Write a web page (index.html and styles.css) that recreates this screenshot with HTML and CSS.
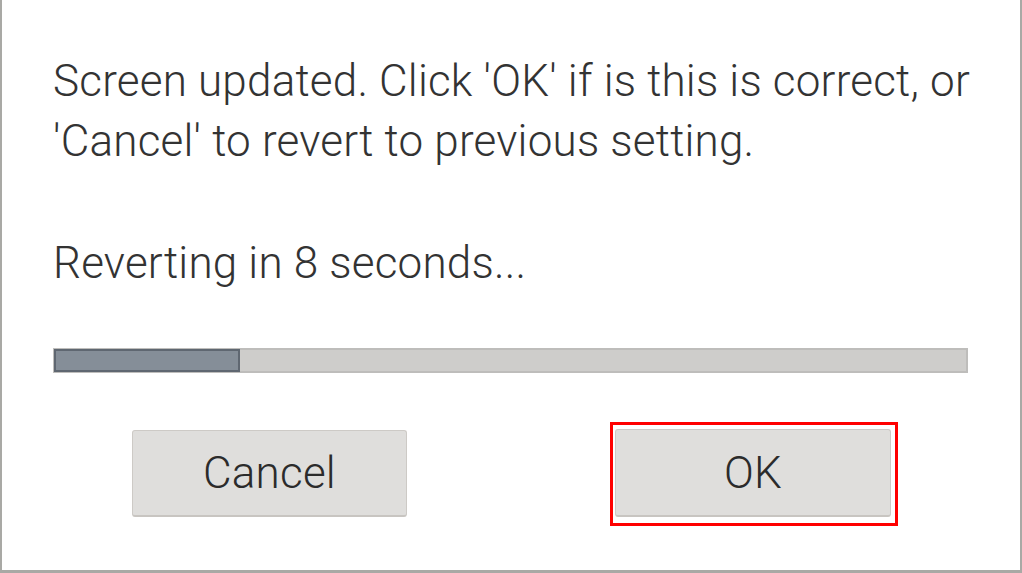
FILE: index.html
```html
<!DOCTYPE html>
<html>
<head>
<meta charset="utf-8">
<link rel="stylesheet" href="styles.css">
</head>
<body>
<div class="dialog">
  <p class="message">Screen updated. Click 'OK' if is this is correct, or<br>'Cancel' to revert to previous setting.</p>
  <p class="countdown">Reverting in 8 seconds...</p>
  <div class="progress"><div class="progress-fill" style="width: 20.4%"></div></div>
  <div class="actions">
    <button class="btn btn-cancel">Cancel</button>
    <div class="focus-ring"><button class="btn btn-ok">OK</button></div>
  </div>
</div>
</body>
</html>
```
FILE: styles.css
```css
html, body {
  margin: 0;
  padding: 0;
  background: #ffffff;
}
.dialog {
  box-sizing: border-box;
  width: 1022px;
  height: 573px;
  border-left: 2px solid #a9a9a5;
  border-right: 2px solid #a9a9a5;
  border-bottom: 3px solid #a9a9a5;
  padding: 51px 0 0 51px;
  font-family: Roboto, "Liberation Sans", sans-serif;
  color: #333333;
  overflow: hidden;
}
.message, .countdown {
  margin: 0;
  font-size: 44px;
  letter-spacing: 0.2px;
  font-weight: 300;
  line-height: 60px;
  white-space: nowrap;
}
.countdown {
  margin-top: 62px;
}
.progress {
  box-sizing: border-box;
  margin-top: 55px;
  width: 915px;
  height: 25px;
  background: #cecdcb;
  border: 2px solid #bebdbb;
  position: relative;
}
.progress-fill {
  box-sizing: border-box;
  position: absolute;
  left: -1px;
  top: -1px;
  height: 23px;
  background: #858e98;
  border: 2px solid #5f6771;
}
.actions {
  display: flex;
  align-items: flex-start;
  margin-top: 49px;
  padding-left: 79px;
}
.btn {
  box-sizing: border-box;
  width: 276px;
  height: 88px;
  background: #dfdedc;
  border: 1px solid #cdcac6;
  border-bottom: 2px solid #c8c5c1;
  border-radius: 3px;
  font-family: Roboto, "Liberation Sans", sans-serif;
  font-size: 44px;
  letter-spacing: 0.2px;
  font-weight: 300;
  color: #2b2b2b;
  padding: 0;
  margin: 0;
}
.btn-cancel {
  width: 275px;
  height: 87px;
  margin-top: 8px;
}
.focus-ring {
  box-sizing: border-box;
  margin-left: 203px;
  width: 288px;
  height: 104px;
  border: 3px solid #ff0000;
  padding: 4px 4px 6px 2px;
}
```
